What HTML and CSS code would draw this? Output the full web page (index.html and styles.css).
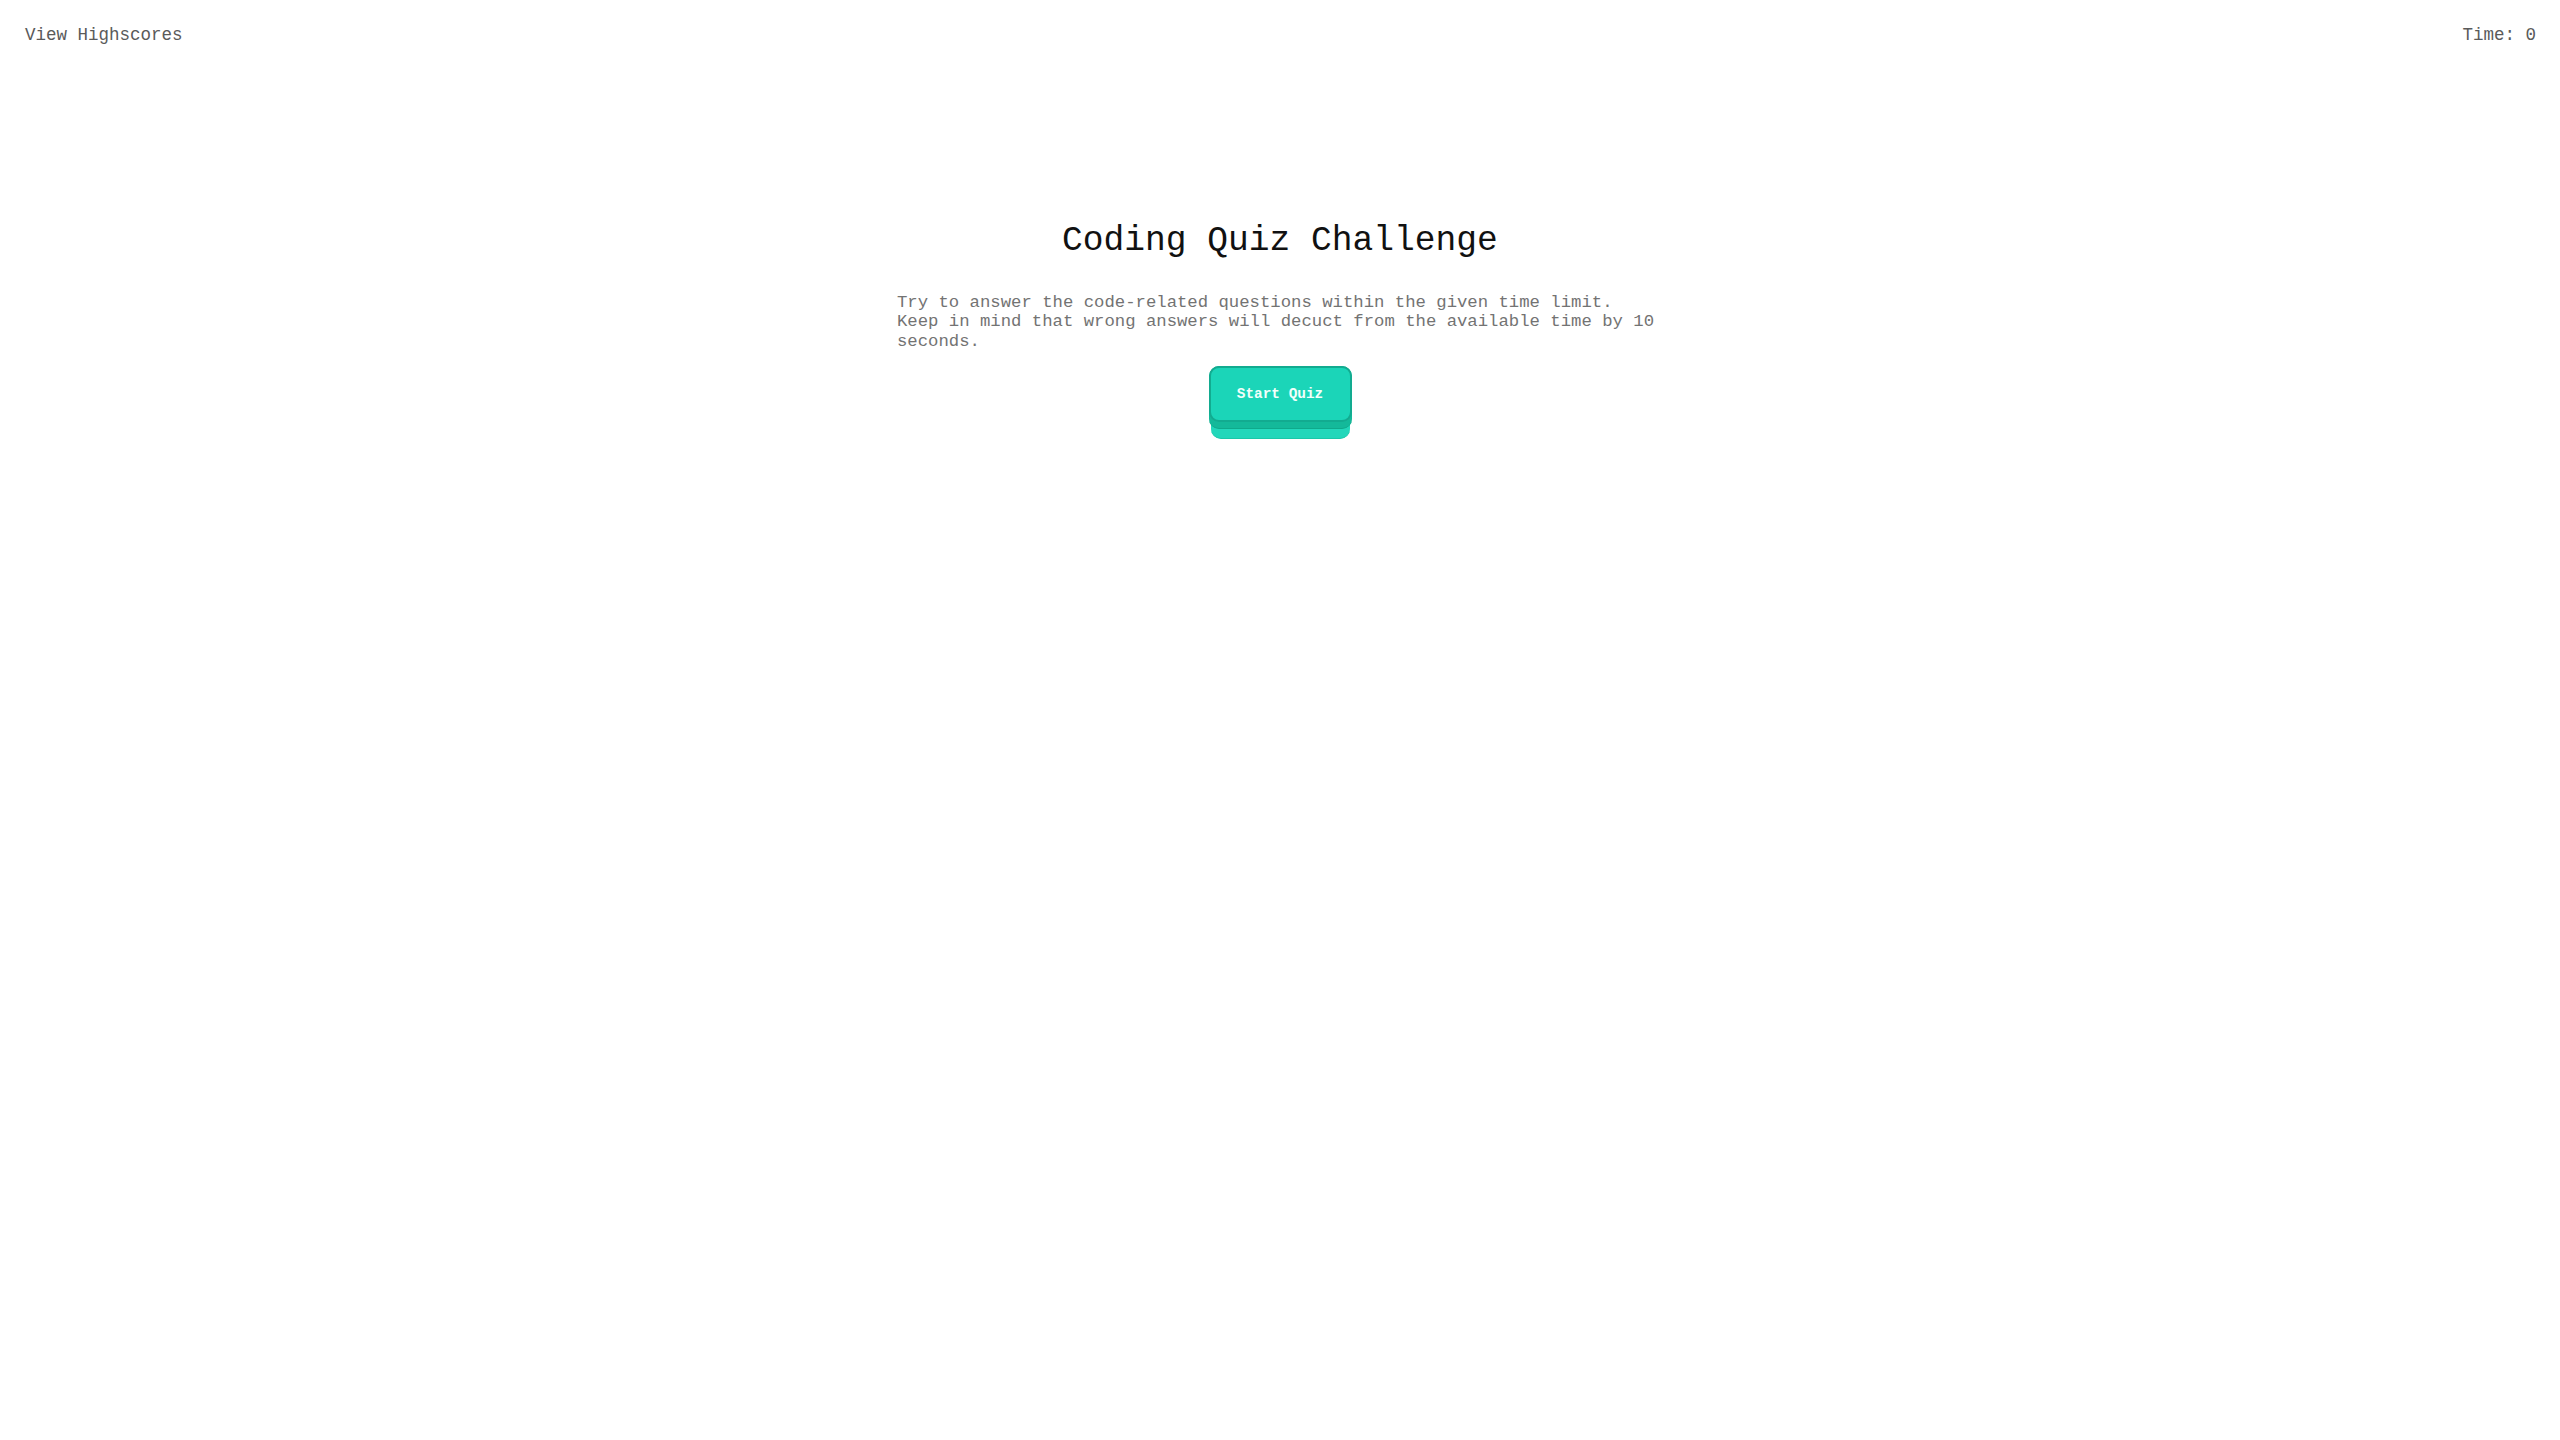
FILE: index.html
```html
<!DOCTYPE html>
<html lang="en">
<head>
<meta charset="utf-8">
<title>Coding Quiz Challenge</title>
<link rel="stylesheet" href="styles.css">
</head>
<body>
<header class="topbar">
  <a class="highscores" href="#">View Highscores</a>
  <div class="timer">Time: <span>0</span></div>
</header>
<main class="quiz">
  <h1 class="title">Coding Quiz Challenge</h1>
  <p class="intro">Try to answer the code-related questions within the given time limit.<br>Keep in mind that wrong answers will decuct from the available time by 10 seconds.</p>
  <div class="start-stack">
    <div class="start-depth">
      <button class="start" type="button">Start Quiz</button>
    </div>
  </div>
</main>
</body>
</html>
```

FILE: styles.css
```css
html, body {
  margin: 0;
  padding: 0;
  background: #ffffff;
}
body {
  font-family: "Liberation Mono", "DejaVu Sans Mono", monospace;
  color: #555555;
}
.topbar {
  display: flex;
  justify-content: space-between;
  align-items: flex-start;
  padding: 25px 24px 0 25px;
  font-size: 17.5px;
  line-height: normal;
}
.highscores {
  color: #5a5a5a;
  text-decoration: none;
}
.timer {
  color: #5a5a5a;
}
.quiz {
  width: 768px;
  margin: 0 auto;
  display: flex;
  flex-direction: column;
  align-items: center;
  padding-top: 175px;
}
.title {
  margin: 0;
  font-size: 34.6px;
  line-height: 42px;
  font-weight: normal;
  color: #111111;
  text-align: center;
}
.intro {
  align-self: stretch;
  margin: 31px 0 0 1px;
  font-size: 17.3px;
  line-height: 19.4px;
  color: #737373;
  text-align: left;
}
.start-stack {
  margin-top: 15px;
  width: 139px;
  padding-bottom: 9px;
  background: #22d7ba;
  border-radius: 10px;
  border-bottom: 1px solid #1ac7a9;
  box-sizing: content-box;
}
.start-depth {
  margin: 0 -2px;
  padding-bottom: 6px;
  background: #14b99a;
  border-radius: 10px;
  border-bottom: 1px solid #0fa98b;
}
.start {
  display: flex;
  align-items: center;
  justify-content: center;
  width: 143px;
  height: 56px;
  margin: 0;
  padding: 0;
  box-sizing: border-box;
  font-family: "Liberation Mono", "DejaVu Sans Mono", monospace;
  font-size: 14.4px;
  font-weight: bold;
  color: #f2fffb;
  background: #1bd5b8;
  border: 2px solid #12ab90;
  border-radius: 10px;
  cursor: pointer;
}
```
